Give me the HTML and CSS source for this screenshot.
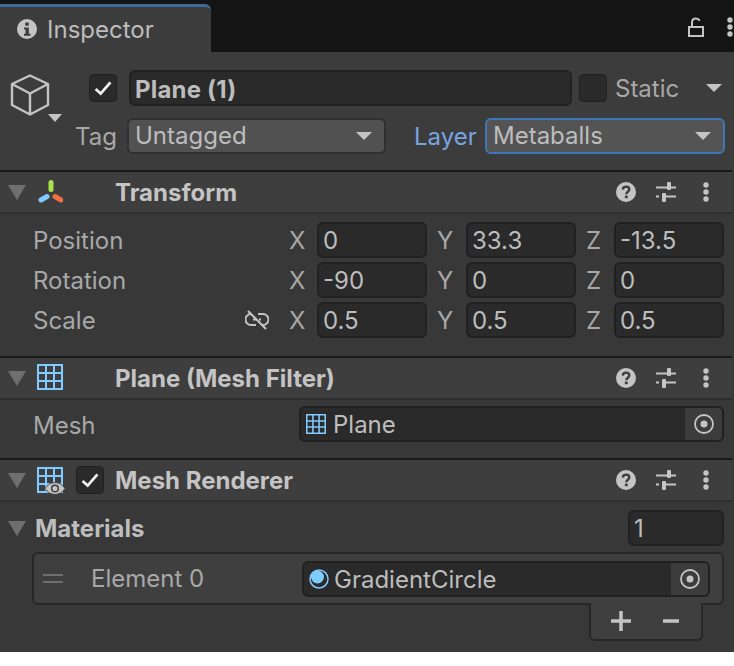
FILE: index.html
```html
<!DOCTYPE html>
<html lang="en">
<head>
    <meta charset="UTF-8">
    <meta name="viewport" content="width=device-width, initial-scale=1.0">
    <title>Inspector</title>
    <link rel="stylesheet" href="styles.css">
</head>
<body>
    <svg class="sprites" width="0" height="0">
        <symbol id="i-check" viewBox="0 0 28 28">
            <path d="M6 15l5.500 5L22 8" fill="none" stroke="#f0f0f0" stroke-width="3"/>
        </symbol>
        <symbol id="i-help" viewBox="0 0 20 20">
            <circle cx="10" cy="10" r="10" fill="#c4c4c4"/>
            <path d="M6.800 7.600C6.900 5.600 8.200 4.600 10.100 4.600c1.900 0 3.200 1.100 3.200 2.700 0 2.500-3 2.400-3 5" fill="none" stroke="#3e3e3e" stroke-width="2.400"/>
            <rect x="8.900" y="13.600" width="2.800" height="2.600" fill="#3e3e3e"/>
        </symbol>
        <symbol id="i-sliders" viewBox="0 0 20 20">
            <path d="M0 5.500h20M0 14.500h3M6 14.500h14" fill="none" stroke="#c4c4c4" stroke-width="2"/>
            <rect x="11" y="0" width="4" height="8" rx="1" fill="#c4c4c4"/>
            <rect x="6" y="11" width="4" height="9" rx="1" fill="#c4c4c4"/>
        </symbol>
        <symbol id="i-dots" viewBox="0 0 6 20">
            <circle cx="3" cy="3" r="2.700" fill="#c4c4c4"/>
            <circle cx="3" cy="10" r="2.700" fill="#c4c4c4"/>
            <circle cx="3" cy="17" r="2.700" fill="#c4c4c4"/>
        </symbol>
        <symbol id="i-grid" viewBox="0 0 26 26">
            <path d="M1 1h24v24H1zM9 1v24M17 1v24M1 9h24M1 17h24" fill="none" stroke="#80cbff" stroke-width="2"/>
        </symbol>
        <symbol id="i-target" viewBox="0 0 20 20">
            <circle cx="10" cy="10" r="9" fill="none" stroke="#c4c4c4" stroke-width="1.800"/>
            <circle cx="10" cy="10" r="3.500" fill="#c4c4c4"/>
        </symbol>
    </svg>

    <div class="inspector">
        <div class="tabbar">
            <div class="tab">
                <svg class="tab-icon" viewBox="0 0 20 20">
                    <circle cx="10" cy="10" r="10" fill="#c4c4c4"/>
                    <rect x="8.200" y="3.500" width="3.600" height="3.200" fill="#3c3c3c"/>
                    <path d="M7 8.500h4.800v6.200H13.500v2H7v-2h1.500v-4.200H7z" fill="#3c3c3c"/>
                </svg>
                <span>Inspector</span>
            </div>
            <div class="tabbar-tools">
                <svg class="lock-icon" viewBox="0 0 16 20">
                    <path d="M1 10h14v9H1zM4 10V5.500C4 3 5.700 1.500 8 1.500c1.800 0 3 .8 3.700 2.200" fill="none" stroke="#c4c4c4" stroke-width="2"/>
                </svg>
                <svg class="tool-dots"><use href="#i-dots"/></svg>
            </div>
        </div>

        <div class="go-head">
            <div class="go-icon">
                <svg class="cube" viewBox="0 0 40 42">
                    <path d="M20 1.500L38 10v21L20 40.500 2 31V10zM2 10l18 9.500L38 10M20 19.500v21" fill="none" stroke="#c4c4c4" stroke-width="2.400" stroke-linejoin="round"/>
                </svg>
                <span class="go-caret"></span>
            </div>
            <div class="go-fields">
                <div class="go-row go-row-name">
                    <span class="checkbox"><svg><use href="#i-check"/></svg></span>
                    <div class="field name-field">Plane (1)</div>
                    <span class="checkbox"></span>
                    <span class="static-label">Static</span>
                    <span class="caret static-caret"></span>
                </div>
                <div class="go-row">
                    <span class="tag-label">Tag</span>
                    <div class="dropdown tag-dropdown"><span>Untagged</span><span class="caret"></span></div>
                    <span class="layer-label">Layer</span>
                    <div class="dropdown layer-dropdown"><span>Metaballs</span><span class="caret"></span></div>
                </div>
            </div>
        </div>

        <div class="component">
            <div class="comp-header">
                <span class="foldout"></span>
                <svg class="comp-icon" viewBox="0 0 26 26">
                    <path d="M14 4.500v7" stroke="#a6e34b" stroke-width="5" stroke-linecap="round"/>
                    <path d="M10 18.500l-6 3.500" stroke="#80cbff" stroke-width="5" stroke-linecap="round"/>
                    <path d="M18 18.500l6 3.500" stroke="#ef7140" stroke-width="5" stroke-linecap="round"/>
                </svg>
                <span class="comp-title">Transform</span>
                <div class="comp-tools">
                    <svg class="tool-help"><use href="#i-help"/></svg>
                    <svg class="tool-sliders"><use href="#i-sliders"/></svg>
                    <svg class="tool-dots"><use href="#i-dots"/></svg>
                </div>
            </div>
            <div class="transform-body">
                <div class="vec-row">
                    <span class="prop-label">Position</span>
                    <div class="vec-fields">
                        <span class="axis">X</span><div class="field">0</div>
                        <span class="axis">Y</span><div class="field">33.3</div>
                        <span class="axis">Z</span><div class="field">-13.5</div>
                    </div>
                </div>
                <div class="vec-row">
                    <span class="prop-label">Rotation</span>
                    <div class="vec-fields">
                        <span class="axis">X</span><div class="field">-90</div>
                        <span class="axis">Y</span><div class="field">0</div>
                        <span class="axis">Z</span><div class="field">0</div>
                    </div>
                </div>
                <div class="vec-row">
                    <span class="prop-label">Scale</span>
                    <svg class="unlink-icon" viewBox="0 0 24 20">
                        <path d="M7 4H6a5.500 5.500 0 0 0 0 11h5M17 15h1a5.500 5.500 0 0 0 0-11h-5M8 9.500h3M14 9.500h2M3 1l18 18" fill="none" stroke="#c4c4c4" stroke-width="2"/>
                    </svg>
                    <div class="vec-fields">
                        <span class="axis">X</span><div class="field">0.5</div>
                        <span class="axis">Y</span><div class="field">0.5</div>
                        <span class="axis">Z</span><div class="field">0.5</div>
                    </div>
                </div>
            </div>
        </div>

        <div class="component">
            <div class="comp-header">
                <span class="foldout"></span>
                <svg class="comp-icon"><use href="#i-grid"/></svg>
                <span class="comp-title">Plane (Mesh Filter)</span>
                <div class="comp-tools">
                    <svg class="tool-help"><use href="#i-help"/></svg>
                    <svg class="tool-sliders"><use href="#i-sliders"/></svg>
                    <svg class="tool-dots"><use href="#i-dots"/></svg>
                </div>
            </div>
            <div class="mesh-body">
                <span class="prop-label mesh-label">Mesh</span>
                <div class="field object-field mesh-field">
                    <svg class="object-icon"><use href="#i-grid"/></svg>
                    <span class="object-name">Plane</span>
                    <span class="object-picker"><svg><use href="#i-target"/></svg></span>
                </div>
            </div>
        </div>

        <div class="component">
            <div class="comp-header">
                <span class="foldout"></span>
                <div class="renderer-icon">
                    <svg class="comp-icon"><use href="#i-grid"/></svg>
                    <svg class="eye-icon" viewBox="0 0 22 14">
                        <path d="M0 7C3 2.500 7 .5 11 .5S19 2.500 22 7c-3 4.500-7 6.500-11 6.500S3 11.500 0 7z" fill="#c4c4c4" stroke="#3e3e3e" stroke-width="1"/>
                        <circle cx="11" cy="7" r="4.500" fill="#3e3e3e"/>
                        <circle cx="11" cy="7" r="2.800" fill="#c4c4c4"/>
                    </svg>
                </div>
                <span class="checkbox renderer-check"><svg><use href="#i-check"/></svg></span>
                <span class="comp-title renderer-title">Mesh Renderer</span>
                <div class="comp-tools">
                    <svg class="tool-help"><use href="#i-help"/></svg>
                    <svg class="tool-sliders"><use href="#i-sliders"/></svg>
                    <svg class="tool-dots"><use href="#i-dots"/></svg>
                </div>
            </div>
            <div class="materials-body">
                <div class="materials-head">
                    <span class="foldout"></span>
                    <span class="materials-title">Materials</span>
                    <div class="field count-field">1</div>
                </div>
                <div class="list-box">
                    <div class="drag-handle"></div>
                    <span class="element-label">Element 0</span>
                    <div class="field object-field element-field">
                        <svg class="material-icon" viewBox="0 0 20 20">
                            <circle cx="10" cy="10" r="9" fill="#2a2a2a" stroke="#80cbff" stroke-width="1.500"/>
                            <circle cx="8.500" cy="8" r="6.500" fill="#80cbff"/>
                        </svg>
                        <span class="object-name">GradientCircle</span>
                        <span class="object-picker"><svg><use href="#i-target"/></svg></span>
                    </div>
                </div>
                <div class="list-footer">
                    <span class="list-btn">
                        <svg class="plus-icon" viewBox="0 0 20 20"><path d="M10 0v20M0 10h20" stroke="#c4c4c4" stroke-width="3.500"/></svg>
                    </span>
                    <span class="list-btn">
                        <svg class="minus-icon" viewBox="0 0 16 4"><path d="M0 2h16" stroke="#c4c4c4" stroke-width="3.500"/></svg>
                    </span>
                </div>
            </div>
        </div>
    </div>
</body>
</html>
```

FILE: styles.css
```css
* {
    box-sizing: border-box;
}
body {
    margin: 0;
    background-color: #fff;
    font-family: Inter, "Noto Sans", sans-serif;
    font-size: 24px;
    color: #bdbdbd;
}
.sprites {
    position: absolute;
}
.inspector {
    width: 734px;
    height: 652px;
    overflow: hidden;
    background-color: #383838;
}

/* tab bar */
.tabbar {
    height: 52px;
    background-color: #141414;
    padding-top: 4px;
    display: flex;
    justify-content: space-between;
}
.tab {
    width: 211px;
    background-color: #3c3c3c;
    border-top: 3px solid #3e6a9e;
    border-top-right-radius: 6px;
    display: flex;
    align-items: center;
    gap: 10px;
    padding: 0 0 1px 17px;
}
.tab-icon {
    width: 20px;
    height: 20px;
}
.tabbar-tools {
    display: flex;
    align-items: center;
    gap: 23px;
    padding: 0 0 2px 0;
    margin-right: 1px;
}
.lock-icon {
    width: 16px;
    height: 20px;
}
.tool-dots {
    width: 6px;
    height: 20px;
}

/* game object header */
.go-head {
    height: 118px;
    background-color: #3c3c3c;
    display: flex;
    padding: 18px 0 0 10px;
}
.go-icon {
    width: 66px;
    position: relative;
}
.cube {
    display: block;
    width: 40px;
    height: 42px;
    margin-top: 4px;
}
.go-caret {
    position: absolute;
    left: 38px;
    top: 44px;
    border: 7px solid transparent;
    border-top: 8px solid #c4c4c4;
    border-bottom: 0;
}
.go-fields {
    flex: 1;
}
.go-row {
    display: flex;
    align-items: center;
    height: 36px;
}
.go-row-name {
    margin-bottom: 12px;
    padding-left: 13px;
}
.checkbox {
    width: 28px;
    height: 28px;
    flex: none;
    display: block;
    background-color: #2a2a2a;
    border: 1px solid #212121;
    border-radius: 4px;
}
.checkbox svg {
    display: block;
    width: 26px;
    height: 26px;
}
.field {
    height: 36px;
    background-color: #2a2a2a;
    border: 2px solid #212121;
    border-radius: 6px;
    padding: 0 0 0 4px;
    line-height: 33px;
    white-space: nowrap;
}
.name-field {
    width: 443px;
    margin: 0 7px 0 12px;
    font-weight: 700;
    line-height: 35px;
    letter-spacing: 0.2px;
}
.static-label {
    margin-left: 8px;
    width: 91px;
    color: #a8a8a8;
}
.caret {
    display: block;
    border: 8px solid transparent;
    border-top: 8px solid #c4c4c4;
    border-bottom: 0;
}
.tag-label {
    width: 52px;
    margin-left: -1px;
    color: #a8a8a8;
}
.dropdown {
    height: 36px;
    background-color: #515151;
    border: 2px solid #303030;
    border-radius: 6px;
    display: flex;
    align-items: center;
    justify-content: space-between;
    padding: 0 12px 1px 6px;
}
.tag-dropdown {
    width: 259px;
}
.layer-label {
    margin-left: 28px;
    width: 71px;
    color: #78a4e0;
}
.layer-dropdown {
    width: 240px;
    background-color: #545454;
    border-color: #3f76b5;
}

/* components */
.component {
    margin-right: 2px;
    border-top: 2px solid #1a1a1a;
}
.comp-header {
    height: 42px;
    background-color: #3e3e3e;
    border-bottom: 2px solid #2f2f2f;
    display: flex;
    align-items: center;
    padding-left: 8px;
}
.foldout {
    display: block;
    flex: none;
    border: 9px solid transparent;
    border-top: 15px solid #6f6f6f;
    border-bottom: 0;
}
.comp-icon {
    width: 26px;
    height: 26px;
    margin: 0 0 2px 11px;
    flex: none;
}
.comp-title {
    margin-left: 52px;
    font-weight: 700;
    color: #c4c4c4;
}
.comp-tools {
    margin-left: auto;
    margin-right: 23px;
    display: flex;
    align-items: center;
}
.tool-help {
    width: 20px;
    height: 20px;
    margin-right: 20px;
}
.tool-sliders {
    width: 20px;
    height: 20px;
    margin-right: 27px;
}

/* transform */
.transform-body {
    height: 142px;
    padding-top: 8px;
}
.vec-row {
    height: 36px;
    margin-bottom: 4px;
    display: flex;
    align-items: center;
    padding-left: 33px;
}
.prop-label {
    color: #a8a8a8;
}
.vec-row .prop-label {
    width: 212px;
}
.mesh-label {
    margin-top: 3px;
}
.unlink-icon {
    width: 24px;
    height: 20px;
}
.vec-fields {
    margin-left: auto;
    margin-right: 8px;
    display: grid;
    grid-template-columns: 38px 110px 39px 110px 38px 110px;
    align-items: center;
}
.axis {
    color: #a8a8a8;
    padding-left: 10px;
}

/* object fields */
.object-field {
    display: flex;
    align-items: center;
    padding: 0 0 0 5px;
}
.object-icon {
    width: 20px;
    height: 20px;
    margin-right: 7px;
}
.object-name {
    flex: 1;
    margin-top: 1px;
}
.object-picker {
    width: 37px;
    height: 32px;
    background-color: #3c3c3c;
    display: flex;
    align-items: center;
    justify-content: center;
    border-radius: 0 4px 4px 0;
}
.object-picker svg {
    width: 20px;
    height: 20px;
}
.mesh-body {
    height: 58px;
    display: flex;
    align-items: center;
    padding: 0 8px 10px 33px;
}
.mesh-field {
    width: 425px;
    margin-left: auto;
}

/* mesh renderer */
.renderer-icon {
    position: relative;
    width: 50px;
    height: 26px;
    flex: none;
}
.eye-icon {
    position: absolute;
    left: 19px;
    top: 15px;
    width: 20px;
    height: 13px;
}
.renderer-title {
    margin-left: 11px;
}
.materials-body {
    height: 152px;
}
.materials-head {
    display: flex;
    align-items: center;
    height: 36px;
    margin-top: 8px;
    padding: 0 8px 0 8px;
}
.materials-title {
    margin-left: 9px;
    font-weight: 700;
    color: #bdbdbd;
}
.count-field {
    width: 96px;
    margin-left: auto;
}
.list-box {
    height: 53px;
    margin: 6px 8px 0 32px;
    background-color: #3f3f3f;
    border: 2px solid #272727;
    border-radius: 6px;
    display: flex;
    align-items: center;
    padding: 0 12px 0 9px;
}
.drag-handle {
    width: 20px;
    height: 9px;
    border-top: 2px solid #6f6f6f;
    border-bottom: 2px solid #6f6f6f;
}
.element-label {
    margin-left: 28px;
    color: #a8a8a8;
}
.element-field {
    width: 408px;
    margin-left: auto;
}
.material-icon {
    width: 20px;
    height: 20px;
    margin-right: 5px;
}
.list-footer {
    width: 114px;
    height: 38px;
    margin: -2px 29px 0 auto;
    background-color: #3f3f3f;
    border: 2px solid #272727;
    border-top: 0;
    border-radius: 0 0 6px 6px;
    display: flex;
    align-items: center;
    padding-left: 20px;
    gap: 32px;
}
.list-btn {
    display: flex;
}
.plus-icon {
    width: 20px;
    height: 20px;
}
.minus-icon {
    width: 16px;
    height: 4px;
}
```
